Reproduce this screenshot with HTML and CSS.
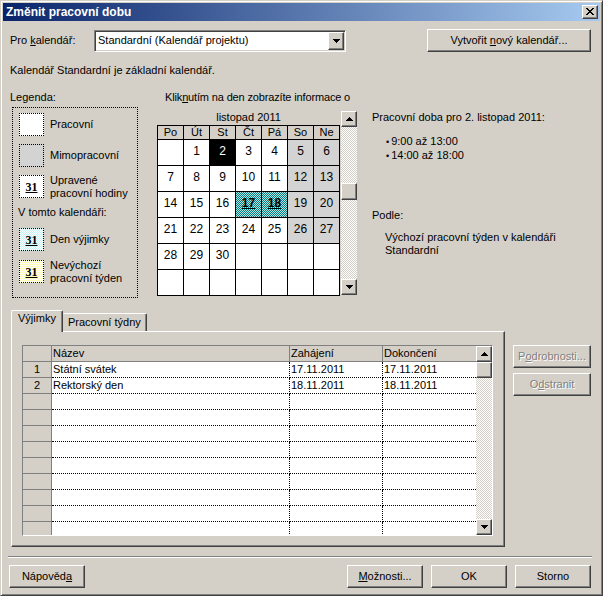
FILE: index.html
```html
<!DOCTYPE html>
<html lang="cs">
<head>
<meta charset="utf-8">
<title>Změnit pracovní dobu</title>
<link rel="stylesheet" href="styles.css">
</head>
<body>
<div class="window">
  <div class="titlebar">
    <span class="title">Změnit pracovní dobu</span>
    <span class="close raised">
      <svg width="8" height="7" viewBox="0 0 8 7" shape-rendering="crispEdges"><g fill="#000"><rect x="0" y="0" width="2" height="1"/><rect x="6" y="0" width="2" height="1"/><rect x="1" y="1" width="2" height="1"/><rect x="5" y="1" width="2" height="1"/><rect x="2" y="2" width="4" height="1"/><rect x="3" y="3" width="2" height="1"/><rect x="2" y="4" width="4" height="1"/><rect x="1" y="5" width="2" height="1"/><rect x="5" y="5" width="2" height="1"/><rect x="0" y="6" width="2" height="1"/><rect x="6" y="6" width="2" height="1"/></g></svg>
    </span>
  </div>
  <div class="body">
    <div class="toprow">
      <span class="lbl">Pro <u>k</u>alendář:</span>
      <div class="combo">
        <span class="combo-text">Standardní (Kalendář projektu)</span>
        <span class="combo-btn raised"><svg width="7" height="4" viewBox="0 0 7 4" shape-rendering="crispEdges"><g fill="#000"><rect x="0" y="0" width="7" height="1"/><rect x="1" y="1" width="5" height="1"/><rect x="2" y="2" width="3" height="1"/><rect x="3" y="3" width="1" height="1"/></g></svg></span>
      </div>
      <button class="btn btn-new"><span>Vytvořit <u>n</u>ový kalendář...</span></button>
    </div>
    <div class="info">Kalendář Standardní je základní kalendář.</div>
    <div class="middle">
      <div class="legend-col">
        <div>Legenda:</div>
        <div class="legend">
          <div class="li"><span class="sw"></span><span class="lt">Pracovní</span></div>
          <div class="li"><span class="sw sw-non"></span><span class="lt">Mimopracovní</span></div>
          <div class="li"><span class="sw"><b>31</b></span><span class="lt">Upravené<br>pracovní hodiny</span></div>
          <div class="lh">V tomto kalendáři:</div>
          <div class="li li-a"><span class="sw sw-exc"><b>31</b></span><span class="lt">Den výjimky</span></div>
          <div class="li li-b"><span class="sw sw-wk"><b>31</b></span><span class="lt">Nevýchozí<br>pracovní týden</span></div>
        </div>
      </div>
      <div class="cal-col">
        <div class="hint">Klik<u>n</u>utím na den zobrazíte informace o</div>
        <div class="cal-wrap">
          <div class="cal">
            <div class="month">listopad 2011</div>
            <div class="grid">
              <div class="hd">Po</div><div class="hd">Út</div><div class="hd">St</div><div class="hd">Čt</div><div class="hd">Pá</div><div class="hd">So</div><div class="hd">Ne</div>
              <div class="d"></div><div class="d">1</div><div class="d sel">2</div><div class="d">3</div><div class="d">4</div><div class="d we">5</div><div class="d we">6</div>
              <div class="d">7</div><div class="d">8</div><div class="d">9</div><div class="d">10</div><div class="d">11</div><div class="d we">12</div><div class="d we">13</div>
              <div class="d">14</div><div class="d">15</div><div class="d">16</div><div class="d ex">17</div><div class="d ex">18</div><div class="d we">19</div><div class="d we">20</div>
              <div class="d">21</div><div class="d">22</div><div class="d">23</div><div class="d">24</div><div class="d">25</div><div class="d we">26</div><div class="d we">27</div>
              <div class="d">28</div><div class="d">29</div><div class="d">30</div><div class="d"></div><div class="d"></div><div class="d"></div><div class="d"></div>
              <div class="d"></div><div class="d"></div><div class="d"></div><div class="d"></div><div class="d"></div><div class="d"></div><div class="d"></div>
            </div>
          </div>
          <div class="vscroll cal-scroll">
            <span class="sb-btn raised"><svg width="7" height="4" viewBox="0 0 7 4" shape-rendering="crispEdges"><g fill="#000"><rect x="3" y="0" width="1" height="1"/><rect x="2" y="1" width="3" height="1"/><rect x="1" y="2" width="5" height="1"/><rect x="0" y="3" width="7" height="1"/></g></svg></span>
            <span class="track cal-track"><span class="thumb raised"></span></span>
            <span class="sb-btn raised"><svg width="7" height="4" viewBox="0 0 7 4" shape-rendering="crispEdges"><g fill="#000"><rect x="0" y="0" width="7" height="1"/><rect x="1" y="1" width="5" height="1"/><rect x="2" y="2" width="3" height="1"/><rect x="3" y="3" width="1" height="1"/></g></svg></span>
          </div>
        </div>
      </div>
      <div class="detail-col">
        <div>Pracovní doba pro 2. listopad 2011:</div>
        <ul class="bullets">
          <li>9:00 až 13:00</li>
          <li>14:00 až 18:00</li>
        </ul>
        <div class="podle">Podle:</div>
        <div class="podle-text">Výchozí pracovní týden v kalendáři<br>Standardní</div>
      </div>
    </div>
    <div class="tabs-area">
      <div class="tabs-left">
        <div class="tabstrip">
          <div class="tab tab-sel">Výjimky</div>
          <div class="tab">Pracovní týdny</div>
        </div>
        <div class="panel">
          <div class="gridtable">
            <div class="gt">
              <div class="rn"></div><div class="c h">Název</div><div class="c h">Zahájení</div><div class="c h last">Dokončení</div>
              <div class="rn">1</div><div class="c">Státní svátek</div><div class="c">17.11.2011</div><div class="c last">17.11.2011</div>
              <div class="rn">2</div><div class="c">Rektorský den</div><div class="c">18.11.2011</div><div class="c last">18.11.2011</div>
              <div class="rn"></div><div class="c"></div><div class="c"></div><div class="c last"></div>
              <div class="rn"></div><div class="c"></div><div class="c"></div><div class="c last"></div>
              <div class="rn"></div><div class="c"></div><div class="c"></div><div class="c last"></div>
              <div class="rn"></div><div class="c"></div><div class="c"></div><div class="c last"></div>
              <div class="rn"></div><div class="c"></div><div class="c"></div><div class="c last"></div>
              <div class="rn"></div><div class="c"></div><div class="c"></div><div class="c last"></div>
              <div class="rn"></div><div class="c"></div><div class="c"></div><div class="c last"></div>
              <div class="rn"></div><div class="c"></div><div class="c"></div><div class="c last"></div>
              <div class="rn"></div><div class="c"></div><div class="c"></div><div class="c last"></div>
              <div class="rn"></div><div class="c"></div><div class="c"></div><div class="c last"></div>
            </div>
            <div class="vscroll tscroll">
              <span class="sb-btn raised"><svg width="7" height="4" viewBox="0 0 7 4" shape-rendering="crispEdges"><g fill="#000"><rect x="3" y="0" width="1" height="1"/><rect x="2" y="1" width="3" height="1"/><rect x="1" y="2" width="5" height="1"/><rect x="0" y="3" width="7" height="1"/></g></svg></span>
              <span class="thumb raised"></span>
              <span class="track"></span>
              <span class="sb-btn raised"><svg width="7" height="4" viewBox="0 0 7 4" shape-rendering="crispEdges"><g fill="#000"><rect x="0" y="0" width="7" height="1"/><rect x="1" y="1" width="5" height="1"/><rect x="2" y="2" width="3" height="1"/><rect x="3" y="3" width="1" height="1"/></g></svg></span>
            </div>
          </div>
        </div>
      </div>
      <div class="side">
        <button class="btn btn-side disabled"><span>P<u>o</u>drobnosti...</span></button>
        <button class="btn btn-side disabled"><span>O<u>d</u>stranit</span></button>
      </div>
    </div>
    <div class="sep"></div>
    <div class="bottom">
      <button class="btn btn-b"><span>Nápověd<u>a</u></span></button>
      <button class="btn btn-b push"><span><u>M</u>ožnosti...</span></button>
      <button class="btn btn-b"><span>OK</span></button>
      <button class="btn btn-b"><span>Storno</span></button>
    </div>
  </div>
</div>
</body>
</html>
```
FILE: styles.css
```css
* { box-sizing: border-box; }

body {
  margin: 0;
  background: #d4d0c8;
  font: 11px/13px "Liberation Sans", Arial, sans-serif;
  color: #000;
}

.window {
  width: 603px;
  height: 596px;
  background: #d4d0c8;
  border: 1px solid;
  border-color: #d4d0c8 #404040 #404040 #d4d0c8;
  box-shadow: inset 1px 1px #fff, inset -1px -1px #808080;
  padding: 2px;
  display: flex;
  flex-direction: column;
}

.raised {
  background: #d4d0c8;
  border: 1px solid;
  border-color: #fff #404040 #404040 #fff;
  box-shadow: inset -1px -1px #808080;
}

.titlebar {
  height: 18px;
  flex: none;
  background: linear-gradient(to right, #0a246a, #a6caf0);
  display: flex;
  align-items: center;
  padding: 0 2px 0 3px;
  color: #fff;
  font-weight: bold;
  font-size: 12px;
}
.title { flex: 1; }
.close {
  width: 16px;
  height: 14px;
  display: flex;
  align-items: center;
  justify-content: center;
  padding-bottom: 1px;
}
.close svg { display: block; }

.body {
  flex: 1;
  padding: 8px 9px 0 7px;
  display: flex;
  flex-direction: column;
}

.toprow {
  display: flex;
  align-items: center;
  height: 23px;
}
.lbl { width: 84px; }
.combo {
  width: 252px;
  height: 22px;
  background: #fff;
  border: 1px solid;
  border-color: #808080 #fff #fff #808080;
  box-shadow: inset 1px 1px #404040, inset -1px -1px #d4d0c8;
  display: flex;
  align-items: center;
  padding: 1px;
}
.combo-text { flex: 1; padding-left: 2px; }
.combo-btn {
  width: 16px;
  height: 18px;
  display: flex;
  align-items: center;
  justify-content: center;
}
.combo-btn svg, .sb-btn svg { display: block; }

.btn {
  font: inherit;
  color: #000;
  background: #d4d0c8;
  border: 1px solid;
  border-color: #fff #404040 #404040 #fff;
  box-shadow: inset -1px -1px #808080;
  height: 23px;
  padding: 0;
  margin: 0;
  display: flex;
  align-items: center;
  justify-content: center;
  white-space: nowrap;
}
.btn-new { margin-left: auto; width: 164px; }
.disabled { color: #808080; text-shadow: 1px 1px #fff; }

.info { margin-top: 12px; }

.middle {
  margin-top: 14px;
  display: flex;
  height: 207px;
}

.legend-col { width: 147px; flex: none; }
.legend {
  margin: 3px 0 0 2px;
  width: 126px;
  height: 191px;
  border: 1px dotted #000;
  padding: 5px 0 0 6px;
}
.li {
  display: flex;
  align-items: center;
  height: 23px;
  margin-bottom: 8px;
}
.li-a { margin-top: 9px; margin-bottom: 9px; }
.lh { margin: 2px 0 0 -1px; }
.sw {
  width: 25px;
  height: 23px;
  flex: none;
  border: 1px dotted #000;
  background: #fff;
  display: flex;
  align-items: center;
  justify-content: center;
}
.sw b {
  font: bold 12px/12px "Liberation Serif", "Times New Roman", serif;
  text-decoration: underline;
}
.sw-non { background: #d3d3d3; }
.sw-exc { background: repeating-conic-gradient(#c4f4f4 0 25%, #fff 0 50%) 0 0 / 2px 2px; }
.sw-wk { background: repeating-conic-gradient(#ffffb0 0 25%, #fff 0 50%) 0 0 / 2px 2px; }
.lt { margin-left: 6px; white-space: nowrap; }

.cal-col { width: 201px; flex: none; }
.hint { padding-left: 8px; white-space: nowrap; letter-spacing: -0.15px; }
.cal-wrap { margin-top: 7px; display: flex; }
.cal { width: 183px; }
.month { height: 14px; text-align: center; }
.grid {
  display: grid;
  grid-template-columns: repeat(7, 25px);
  grid-template-rows: 13px repeat(6, 25px);
  gap: 1px;
  padding: 1px;
  background: #000;
}
.hd {
  background: #d4d0c8;
  text-align: center;
  line-height: 13px;
}
.d {
  background: #fff;
  text-align: center;
  font-size: 12px;
  line-height: 14px;
  padding-top: 4px;
}
.we { background: #d3d3d3; }
.sel { background: #000; color: #fff; }
.ex {
  background: repeating-conic-gradient(#008080 0 25%, #b8e0e0 0 50%) 0 0 / 2px 2px;
  font-weight: bold;
  text-decoration: underline;
}

.vscroll {
  width: 16px;
  display: flex;
  flex-direction: column;
  flex: none;
}
.cal-scroll { margin-left: 1px; height: 184px; }
.sb-btn {
  width: 16px;
  height: 16px;
  flex: none;
  display: flex;
  align-items: center;
  justify-content: center;
}
.track {
  flex: 1;
  background: repeating-conic-gradient(#fff 0 25%, #d4d0c8 0 50%) 0 0 / 2px 2px;
}
.cal-track { padding-top: 56px; }
.thumb { display: block; width: 16px; height: 17px; flex: none; }
.tscroll .thumb { height: 16px; }

.detail-col { padding: 20px 0 0 14px; white-space: nowrap; }
.bullets {
  list-style: none;
  margin: 11px 0 0;
  padding: 0 0 0 14px;
}
.bullets li::before {
  content: "•";
  font-size: 9px;
  margin-right: 2px;
}
.podle { margin-top: 46px; }
.podle-text { margin-top: 9px; padding-left: 13px; }

.tabs-area {
  margin-top: 12px;
  display: flex;
}
.tabs-left { width: 494px; margin-left: 1px; flex: none; }
.tabstrip {
  display: flex;
  align-items: flex-end;
  height: 21px;
}
.tab {
  height: 18px;
  width: 84px;
  border-top: 1px solid #fff;
  border-right: 1px solid #404040;
  box-shadow: inset -1px 0 #808080;
  border-radius: 2px 2px 0 0;
  padding: 2px 0 0 5px;
  white-space: nowrap;
}
.tab-sel {
  position: relative;
  z-index: 1;
  height: 22px;
  width: 52px;
  margin-bottom: -1px;
  border-left: 1px solid #fff;
  background: #d4d0c8;
  padding: 1px 0 0 6px;
}
.panel {
  height: 216px;
  border: 1px solid;
  border-color: #fff #404040 #404040 #fff;
  box-shadow: inset -1px -1px #808080;
  padding: 13px 10px 0 10px;
}
.gridtable {
  width: 471px;
  height: 191px;
  border: 1px solid;
  border-color: #808080 #fff #fff #808080;
  display: flex;
  overflow: hidden;
  background: #fff;
}
.gt {
  display: grid;
  grid-template-columns: 29px 238px 93px 93px;
  grid-auto-rows: 16px;
  align-content: start;
}
.c {
  border-right: 1px dotted #000;
  border-bottom: 1px dotted #000;
  padding-left: 1px;
  line-height: 15px;
  white-space: nowrap;
  overflow: hidden;
}
.c.last { border-right: none; }
.c.h {
  background: #d4d0c8;
  border-right: 1px solid #808080;
  border-bottom: 1px solid #808080;
}
.c.h.last { border-right: none; }
.rn {
  background: #d4d0c8;
  border-right: 1px solid #808080;
  border-bottom: 1px solid #808080;
  text-align: center;
  line-height: 15px;
}
.tscroll { height: 189px; }

.side {
  margin-left: 8px;
  padding-top: 35px;
  display: flex;
  flex-direction: column;
  gap: 5px;
}
.btn-side { width: 78px; }

.sep {
  margin: 9px -1px 0 -2px;
  height: 2px;
  border-top: 1px solid #808080;
  border-bottom: 1px solid #fff;
}
.bottom {
  margin-top: 7px;
  display: flex;
  gap: 8px;
  margin-left: -1px;
}
.btn-b { width: 76px; }
.push { margin-left: auto; }
```
